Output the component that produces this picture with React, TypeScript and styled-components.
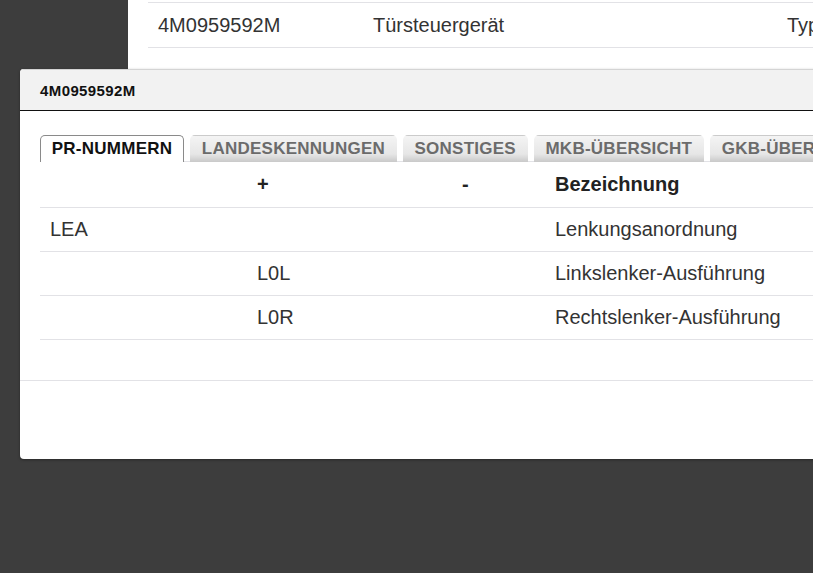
import React from 'react';
import styled, { createGlobalStyle } from 'styled-components';

const GlobalStyle = createGlobalStyle`
  html, body {
    margin: 0;
    padding: 0;
    background: #3d3d3d;
    overflow: hidden;
    font-family: "Liberation Sans", Arial, sans-serif;
  }
`;

const Page = styled.div`
  position: relative;
  width: 813px;
  height: 573px;
  display: flex;
  overflow: hidden;
  background: #3d3d3d;
`;

const Sidebar = styled.div`
  width: 128px;
  flex: none;
`;

const Content = styled.div`
  flex: 1;
  height: 200px;
  background: #fff;
  padding: 2px 0 0 20px;
  box-sizing: border-box;
  overflow: hidden;
`;

const ListRow = styled.div`
  display: grid;
  grid-template-columns: 215px 414px 300px;
  height: 44px;
  align-items: center;
  border-top: 1px solid #e2e2e6;
  border-bottom: 1px solid #e2e2e6;
  font-size: 20px;
  color: #333;
  white-space: nowrap;

  span {
    padding-left: 10px;
  }
`;

const Dialog = styled.div`
  position: absolute;
  left: 20px;
  top: 69px;
  width: 900px;
  height: 390px;
  background: #fff;
  border-radius: 4px;
  box-shadow: 0 1px 3px rgba(0, 0, 0, 0.35);
  display: flex;
  flex-direction: column;
  overflow: hidden;
`;

const DialogHeader = styled.div`
  height: 42px;
  flex: none;
  box-sizing: border-box;
  background: #f2f2f2;
  border-top: 1px solid #d4d4d4;
  border-bottom: 1px solid #111;
  display: flex;
  align-items: center;
  padding-left: 20px;
  font-size: 15px;
  font-weight: bold;
  letter-spacing: 0.4px;
  color: #111;
`;

const DialogBody = styled.div`
  padding: 24px 0 40px 20px;
  border-bottom: 1px solid #e2e2e6;
`;

const TabList = styled.div`
  display: flex;
  gap: 6px;
  border-bottom: 1px solid #e2e2e6;
  white-space: nowrap;
`;

const Tab = styled.div<{ $active?: boolean }>`
  height: 27px;
  box-sizing: border-box;
  display: flex;
  align-items: center;
  padding: 0 10.75px;
  font-size: 17px;
  font-weight: bold;
  letter-spacing: 0.25px;
  border-radius: 5px 5px 0 0;
  color: ${(p) => (p.$active ? '#111' : '#6b6b6b')};
  background: ${(p) =>
    p.$active ? '#fff' : 'linear-gradient(to bottom, #f4f4f4 0%, #e6e6e6 70%, #c9c9c9 100%)'};
  border: 1px solid ${(p) => (p.$active ? '#8a8a8a' : 'transparent')};
  border-bottom: none;
  margin-bottom: -1px;
`;

const Table = styled.div`
  display: grid;
  grid-template-columns: 207px 205px 93px 400px;
`;

const Cell = styled.div<{ $head?: boolean }>`
  height: ${(p) => (p.$head ? '46px' : '44px')};
  box-sizing: border-box;
  display: flex;
  align-items: center;
  padding-left: 10px;
  border-bottom: 1px solid #e2e2e6;
  font-size: 20px;
  white-space: nowrap;
  font-weight: ${(p) => (p.$head ? 'bold' : 'normal')};
  color: ${(p) => (p.$head ? '#222' : '#333')};
`;

const tabs = ['PR-NUMMERN', 'LANDESKENNUNGEN', 'SONSTIGES', 'MKB-ÜBERSICHT', 'GKB-ÜBERSICHT'];

const rows = [
  ['LEA', '', '', 'Lenkungsanordnung'],
  ['', 'L0L', '', 'Linkslenker-Ausführung'],
  ['', 'L0R', '', 'Rechtslenker-Ausführung'],
];

export default function App() {
  return (
    <Page>
      <GlobalStyle />
      <Sidebar />
      <Content>
        <ListRow>
          <span>4M0959592M</span>
          <span>Türsteuergerät</span>
          <span>Typ</span>
        </ListRow>
      </Content>

      <Dialog>
        <DialogHeader>4M0959592M</DialogHeader>
        <DialogBody>
          <TabList>
            {tabs.map((t, i) => (
              <Tab key={t} $active={i === 0}>
                {t}
              </Tab>
            ))}
          </TabList>
          <Table>
            <Cell $head />
            <Cell $head>+</Cell>
            <Cell $head>-</Cell>
            <Cell $head>Bezeichnung</Cell>
            {rows.map((r, i) =>
              r.map((c, j) => <Cell key={`${i}-${j}`}>{c}</Cell>)
            )}
          </Table>
        </DialogBody>
      </Dialog>
    </Page>
  );
}
